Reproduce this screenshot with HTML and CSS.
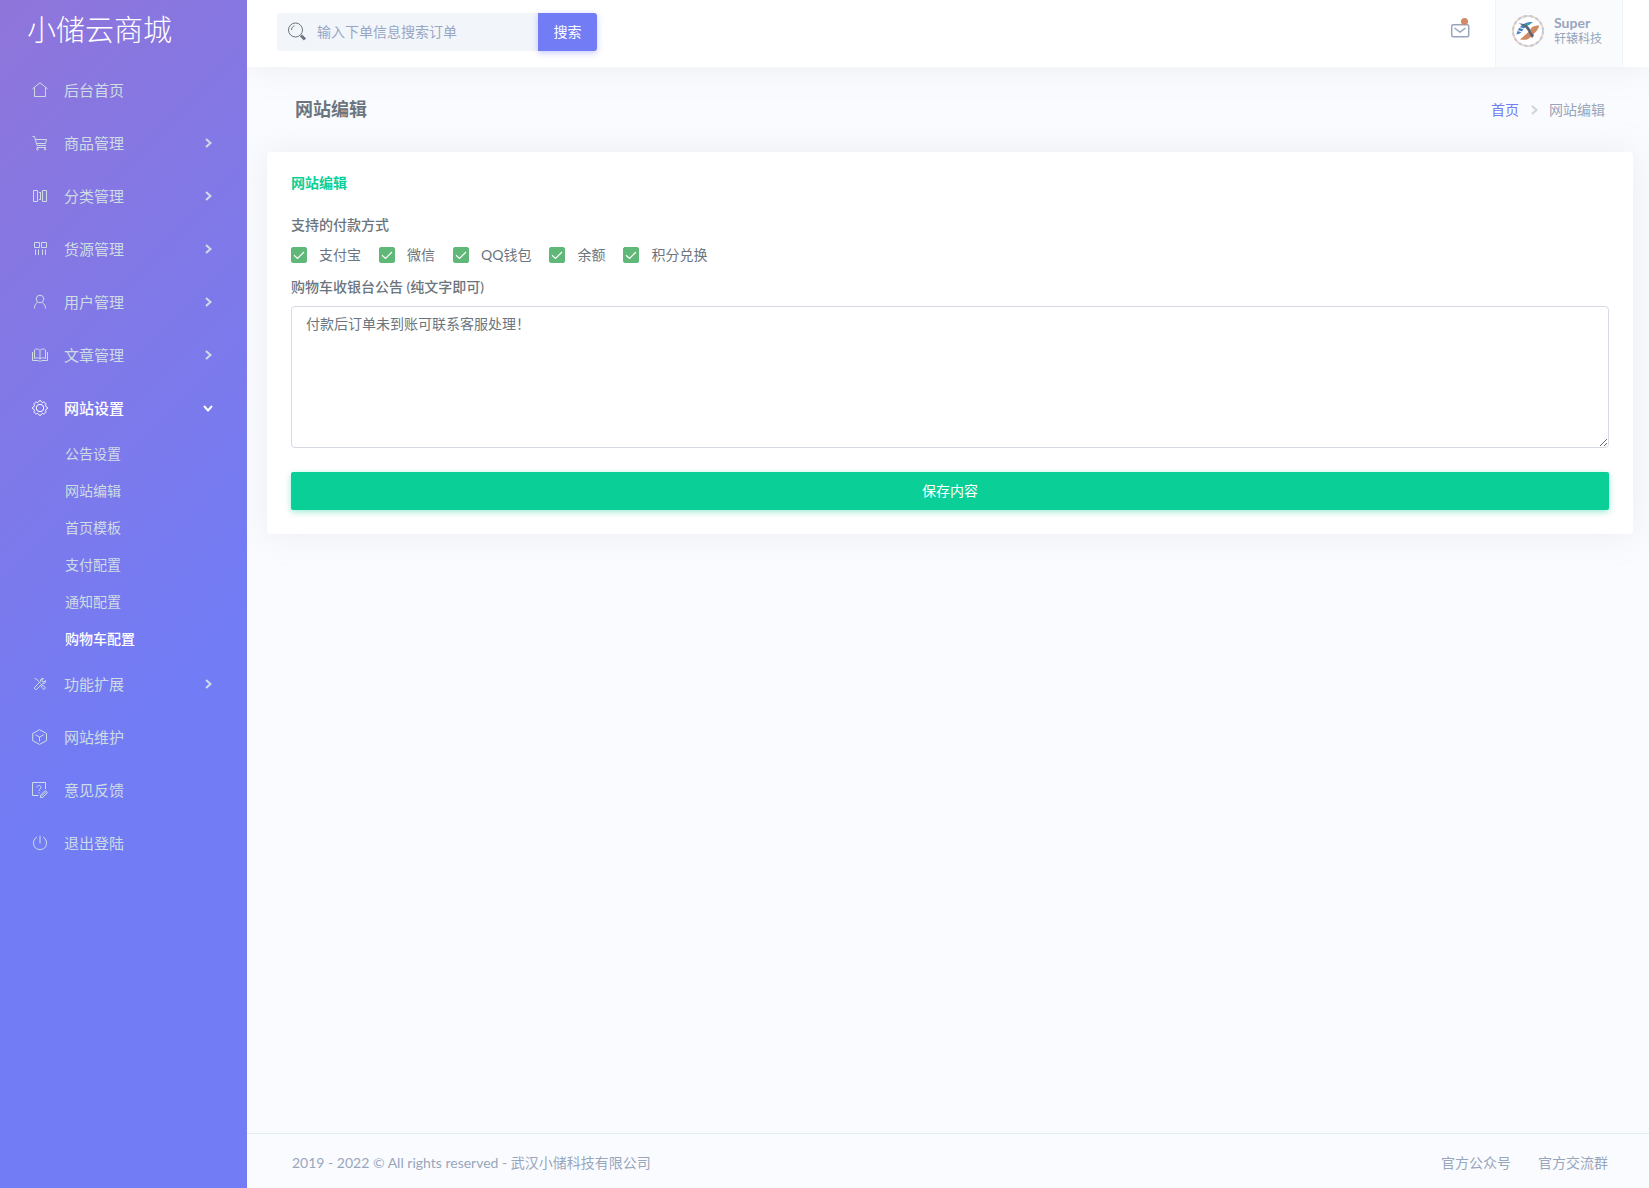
FILE: index.html
```html
<!DOCTYPE html>
<html lang="zh-CN">
<head>
<meta charset="utf-8">
<title>网站编辑 - 小储云商城</title>
<meta name="viewport" content="width=device-width, initial-scale=1">
<link rel="stylesheet" href="styles.css">
</head>
<body>
<svg class="sprite" aria-hidden="true">
  <symbol id="chevron" viewBox="0 0 10 12"><path d="M3 2 L7.500 6 L3 10"/></symbol>
  <symbol id="tick" viewBox="0 0 16 16"><path d="M3 8.200 L6.500 11.500 L13 5"/></symbol>
</svg>
<div class="layout">
  <aside class="sidebar">
    <a class="logo" href="#">小储云商城</a>
    <nav>
      <ul class="menu">
        <li><a class="menu-link" href="#">
          <svg class="icon" viewBox="0 0 16 16"><path d="M.5 6.800 L8 .8 L15.500 6.800 M2.500 5.500 V14.500 H13.500 V5.500"/></svg>
          <span>后台首页</span></a></li>
        <li><a class="menu-link" href="#">
          <svg class="icon" viewBox="0 0 16 16"><path d="M.5 1.500 H2.500 L5 10.500 H14 M3.500 4.500 H14.500 L13.500 8.500 H4.500 M4.500 12.500 H14"/><circle cx="5.500" cy="14.300" r=".8"/><circle cx="13" cy="14.300" r=".8"/></svg>
          <span>商品管理</span><svg class="arrow"><use href="#chevron"/></svg></a></li>
        <li><a class="menu-link" href="#">
          <svg class="icon" viewBox="0 0 16 16"><path d="M1.500 2.500 H5.500 V13.500 H1.500 Z M10.500 2.500 H14.500 V13.500 H10.500 Z M7 4.500 H9 M8.500 4.500 V11.500 M7 11.500 H9"/></svg>
          <span>分类管理</span><svg class="arrow"><use href="#chevron"/></svg></a></li>
        <li><a class="menu-link" href="#">
          <svg class="icon" viewBox="0 0 16 16"><path d="M2.500 1.500 H7.500 V6.500 H2.500 Z M9.500 1.500 H14.500 V6.500 H9.500 Z M3.500 8.500 V14 M6.500 8.500 V14 M10.500 8.500 V14 M13.500 8.500 V14"/></svg>
          <span>货源管理</span><svg class="arrow"><use href="#chevron"/></svg></a></li>
        <li><a class="menu-link" href="#">
          <svg class="icon" viewBox="0 0 16 16"><circle cx="8" cy="5" r="3.800"/><path d="M5.500 8.500 C3.500 9.500 2.500 11.500 2.500 14.500 M10.500 9 C12.500 10 13.500 11.500 13.500 14.500"/></svg>
          <span>用户管理</span><svg class="arrow"><use href="#chevron"/></svg></a></li>
        <li><a class="menu-link" href="#">
          <svg class="icon" viewBox="0 0 16 16"><path d="M8 3.500 C6.500 1.500 3.500 1.500 2.500 3 V11.500 C4 10.500 7 10.500 8 12 C9 10.500 12 10.500 13.500 11.500 V3 C12.500 1.500 9.500 1.500 8 3.500 V12 M.5 5 V13.500 H6.500 L8 14.500 L9.500 13.500 H15.500 V5"/></svg>
          <span>文章管理</span><svg class="arrow"><use href="#chevron"/></svg></a></li>
        <li><a class="menu-link is-active" href="#" aria-expanded="true">
          <svg class="icon" viewBox="0 0 16 16"><circle cx="8" cy="8" r="3.700"/><path d="M8 .6 C9.800 .6 9.500 2.800 10.200 2.700 C11 2.600 11.900 1.300 13.200 2.800 C14.700 4.100 13.400 5 13.300 5.800 C13.200 6.500 15.400 6.200 15.400 8 C15.400 9.800 13.200 9.500 13.300 10.200 C13.400 11 14.700 11.900 13.200 13.200 C11.900 14.700 11 13.400 10.200 13.300 C9.500 13.200 9.800 15.400 8 15.400 C6.200 15.400 6.500 13.200 5.800 13.300 C5 13.400 4.100 14.700 2.800 13.200 C1.300 11.900 2.600 11 2.700 10.200 C2.800 9.500 .6 9.800 .6 8 C.6 6.200 2.800 6.500 2.700 5.800 C2.600 5 1.300 4.100 2.800 2.800 C4.100 1.300 5 2.600 5.800 2.700 C6.500 2.800 6.200 .6 8 .6 Z"/></svg>
          <span>网站设置</span><svg class="arrow"><use href="#chevron"/></svg></a>
          <ul class="submenu">
            <li><a href="#">公告设置</a></li>
            <li><a href="#">网站编辑</a></li>
            <li><a href="#">首页模板</a></li>
            <li><a href="#">支付配置</a></li>
            <li><a href="#">通知配置</a></li>
            <li><a class="is-active" href="#" aria-current="page">购物车配置</a></li>
          </ul></li>
        <li><a class="menu-link" href="#">
          <svg class="icon" viewBox="0 0 16 16"><path d="M2.500 2.500 L4.500 3 L8.500 7.500 M10 9.500 L11 9.200 L13.500 12 L12 13.500 L9.300 11 Z M13.500 4.500 L12 6 L10.500 5.800 L10 4 L11.500 2.500 C9.500 2 8 3.500 8.500 5.500 L2.800 11.200 C1.800 12.700 3.300 14.200 4.800 13.200 L10.500 7.500 C12.500 8 14 6.500 13.500 4.500 Z"/></svg>
          <span>功能扩展</span><svg class="arrow"><use href="#chevron"/></svg></a></li>
        <li><a class="menu-link" href="#">
          <svg class="icon" viewBox="0 0 16 16"><path d="M7.500 .7 L14.500 4.500 V11.700 L7.500 15.400 L.7 11.700 V4.500 Z M3.500 5.800 L7.500 8 L11.700 5.800 M7.500 8 V12.500"/></svg>
          <span>网站维护</span></a></li>
        <li><a class="menu-link" href="#">
          <svg class="icon" viewBox="0 0 16 16"><path d="M13.500 7 V.5 H.5 V13.500 H6.500 M5 5.500 C5 2.800 9 2.800 9 5.300 C9 7 7 7 7 9 M7 10.200 V11.300 M8.500 15.500 V13.200 L13.200 8.500 L15.500 10.700 L10.800 15.300 Z M9.500 14.200 L14.200 9.500"/></svg>
          <span>意见反馈</span></a></li>
        <li><a class="menu-link" href="#">
          <svg class="icon" viewBox="0 0 16 16"><path d="M5 2 C-.3 4.500 .2 14.500 8 14.700 C15.800 14.500 16.300 4.500 11 2 M8 .8 V8.500"/></svg>
          <span>退出登陆</span></a></li>
      </ul>
    </nav>
  </aside>

  <div class="page">
    <header class="topbar">
      <form class="search" role="search">
        <label class="search-field">
          <svg class="search-icon" viewBox="0 0 20 20"><circle cx="8.500" cy="8" r="7"/><path d="M4.500 8 C4.500 5.500 6 4.300 7.500 4"/><path class="search-handle" d="M14 13.500 L18 17.500"/></svg>
          <input type="text" placeholder="输入下单信息搜索订单" aria-label="搜索订单">
        </label>
        <button type="button">搜索</button>
      </form>
      <div class="topbar-right">
        <a class="mail" href="#" aria-label="消息">
          <svg viewBox="0 0 20 22"><rect x="1.700" y="7.700" width="17" height="12" rx="1.500"/><path d="M4.500 11 L10 15 L15.500 11"/><circle cx="14.500" cy="4.500" r="3.500"/></svg>
        </a>
        <a class="user" href="#">
          <svg class="avatar" viewBox="0 0 32 32"><circle class="avatar-rim" cx="16" cy="16" r="15"/><circle class="avatar-dash" cx="16" cy="16" r="15"/>
            <path fill="#d08a64" d="M8 24.500 L17 16.500 L20 12 C23 10.500 25 10.500 27.500 10.500 C25.500 15 24 17 22 18.500 C18 22 18 26 8 24.500Z"/>
            <path fill="#4a82c4" d="M4.500 19.500 C6 11 13 6.500 21 7 L17.500 9.500 C15 10 14 11 12 13.500 C10 16 10 18.500 4.500 19.500 Z"/>
            <path fill="#25b39a" d="M10 11 L20 7.500 L16 10.500 L12 12 Z"/>
            <path fill="none" stroke="#fff" d="M5.500 15.500 L10 17 M7.500 12.500 L12 14"/>
            <path fill="#5d6678" d="M6.500 8.500 C12 8.500 16 10 18 14 C19 16.500 19.500 18 22 20 L20.500 23 C17 21 17 12 6.500 8.500Z"/></svg>
          <span class="user-text"><span class="user-name">Super</span><span class="user-org">轩辕科技</span></span>
        </a>
      </div>
    </header>

    <main class="content">
      <div class="page-head">
        <h1>网站编辑</h1>
        <nav class="breadcrumb" aria-label="面包屑"><a href="#">首页</a><svg><use href="#chevron"/></svg><span>网站编辑</span></nav>
      </div>
      <form class="card">
        <h2>网站编辑</h2>
        <fieldset>
          <legend>支持的付款方式</legend>
          <div class="checks">
            <label><span class="box"><input type="checkbox" checked><svg><use href="#tick"/></svg></span>支付宝</label>
            <label><span class="box"><input type="checkbox" checked><svg><use href="#tick"/></svg></span>微信</label>
            <label><span class="box"><input type="checkbox" checked><svg><use href="#tick"/></svg></span>QQ钱包</label>
            <label><span class="box"><input type="checkbox" checked><svg><use href="#tick"/></svg></span>余额</label>
            <label><span class="box"><input type="checkbox" checked><svg><use href="#tick"/></svg></span>积分兑换</label>
          </div>
        </fieldset>
        <label class="field-label" for="notice">购物车收银台公告 (纯文字即可)</label>
        <textarea id="notice">付款后订单未到账可联系客服处理！</textarea>
        <button class="save" type="button">保存内容</button>
      </form>
    </main>

    <footer class="footer">
      <span>2019 - 2022 © All rights reserved - 武汉小储科技有限公司</span>
      <nav><a href="#">官方公众号</a><a href="#">官方交流群</a></nav>
    </footer>
  </div>
</div>
</body>
</html>
```
FILE: styles.css
```css
* { box-sizing: border-box; }

body {
  margin: 0;
  background: #fafbfe;
  color: #6c757d;
  font: 14px/20px Lato, "Noto Sans CJK SC", sans-serif;
}

a { color: inherit; text-decoration: none; }
ul { list-style: none; margin: 0; padding: 0; }
input, textarea, button { font: inherit; }
svg { fill: none; stroke: currentColor; flex: none; }
.sprite { display: none; }

.layout { display: flex; min-height: 100vh; }

/* Sidebar */
.sidebar {
  flex: none;
  width: 247px;
  background: linear-gradient(135deg, #8f75da 0%, #727cf5 60%);
  color: #cedce4;
  position: relative;
  z-index: 2;
}
.logo {
  display: block;
  padding: 0 27px;
  font-size: 29px;
  line-height: 59px;
  font-weight: 300;
  color: #fff;
}
.menu { padding-top: 4px; }
.menu-link {
  display: flex;
  align-items: center;
  gap: 16px;
  height: 53px;
  padding: 0 34px 0 32px;
  font-size: 15px;
}
.icon { width: 16px; height: 16px; }
.arrow { width: 10px; height: 12px; margin-left: auto; stroke-width: 2; }
.is-active { color: #fff; font-weight: 500; }
.menu-link.is-active .arrow { transform: rotate(90deg); }
.submenu { padding-top: 1px; }
.submenu a { display: block; padding: 0 65px; line-height: 37px; }

/* Top bar */
.page { flex: 1; min-width: 0; display: flex; flex-direction: column; }
.topbar {
  display: flex;
  justify-content: space-between;
  align-items: center;
  height: 67px;
  padding: 0 26px 0 30px;
  background: #fff;
  box-shadow: 0 0 35px rgba(154, 161, 171, .15);
}
.search { display: flex; width: 320px; height: 38px; margin-bottom: 3px; }
.search-field {
  display: flex;
  flex: 1;
  align-items: center;
  gap: 10px;
  padding-left: 10px;
  border-radius: 4px 0 0 4px;
  background: #f2f5fa;
}
.search-icon { width: 20px; height: 20px; color: #6c757d; }
.search-handle { stroke-width: 3; }
.search input {
  flex: 1;
  min-width: 0;
  padding: 0;
  border: 0;
  outline: 0;
  background: none;
  color: #6c757d;
}
.search input::placeholder { color: #98a6c4; opacity: 1; }
.search button {
  width: 59px;
  padding: 0;
  border: 0;
  border-radius: 0 3px 3px 0;
  background: #727cf5;
  color: #fff;
  box-shadow: 0 2px 6px rgba(114, 124, 245, .4);
}
.topbar-right { display: flex; align-items: center; align-self: stretch; gap: 25px; color: #98a6bd; }
.mail svg { display: block; width: 20px; height: 22px; stroke-width: 1.5; }
.mail { margin-bottom: 12px; }
.mail circle { fill: #d08a64; stroke: none; }
.user {
  display: flex;
  gap: 10px;
  width: 128px;
  align-self: stretch;
  padding: 15px 0 0 16px;
  border: 1px solid #f1f3fa;
  border-width: 0 1px;
  background: #fafbfd;
}
.avatar { width: 32px; height: 32px; stroke: none; }
.avatar-rim { fill: #fff; stroke: #ead6c6; stroke-width: 2; }
.avatar-dash { stroke: #c3c9dc; stroke-width: 2; stroke-dasharray: 3 3; }
.user-text { display: flex; flex-direction: column; line-height: 16px; }
.user-name { font-weight: 700; }
.user-org { font-size: 12px; }

/* Content */
.content { flex: 1; padding: 0 16px 24px 20px; }
.page-head {
  display: flex;
  justify-content: space-between;
  align-items: center;
  height: 85px;
  padding: 0 28px 2px;
}
h1 { margin: 0; font-size: 18px; line-height: 24px; font-weight: 700; }
.breadcrumb { display: flex; align-items: center; gap: 10px; padding-top: 2px; color: #98a6bd; }
.breadcrumb a { color: #727cf5; }
.breadcrumb svg { width: 10px; height: 12px; color: #ced4da; stroke-width: 2; }
.card {
  display: flex;
  flex-direction: column;
  padding: 20px 24px 24px;
  border-radius: 4px;
  background: #fff;
  box-shadow: 0 0 35px rgba(154, 161, 171, .15);
}
h2 { margin: 0 0 20px; font-size: 14px; line-height: 22px; font-weight: 700; color: #0acf97; }
fieldset { margin: 0; padding: 0; border: 0; }
legend, .field-label { padding: 0; line-height: 22px; font-weight: 500; }
.checks { display: flex; flex-wrap: wrap; gap: 18px; padding: 9px 0 11px; }
.checks label { display: flex; align-items: center; gap: 12px; }
.box { display: grid; width: 16px; height: 16px; }
.box input, .box svg { grid-area: 1 / 1; width: 16px; height: 16px; margin: 0; }
.box input { appearance: none; border: 1px solid #ced4da; border-radius: 2px; }
.box input:checked { border-color: #5fb878; background: #5fb878; }
.box svg { color: #fff; stroke-width: 1.2; pointer-events: none; z-index: 1; }
.box input:not(:checked) + svg { display: none; }
textarea {
  display: block;
  width: 100%;
  height: 142px;
  margin: 8px 0 24px;
  padding: 7px 14px;
  border: 1px solid #d5dae4;
  border-radius: 4px;
  outline: 0;
  background: #fff;
  color: #6c757d;
  resize: vertical;
}
.save {
  height: 38px;
  border: 0;
  border-radius: 2px;
  background: #0acf97;
  color: #fff;
  box-shadow: 0 2px 6px rgba(10, 207, 151, .4);
}

/* Footer */
.footer {
  display: flex;
  justify-content: space-between;
  align-items: center;
  flex-wrap: wrap;
  min-height: 55px;
  padding: 4px 41px 0 45px;
  border-top: 1px solid #e0eef0;
  color: #98a6bd;
}
.footer nav { display: flex; gap: 27px; }
```
